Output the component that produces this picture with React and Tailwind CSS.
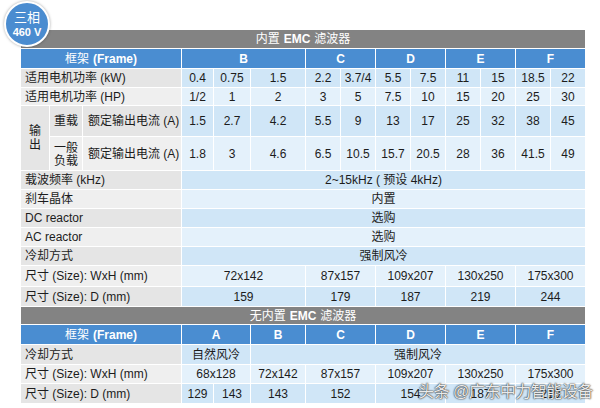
const DARK = "bg-[#d0e6f7]";
const LIGHT = "bg-[#e4f1fb]";
const LDARK = "bg-[#e5e5e5]";
const LLIGHT = "bg-[#efefef]";

const spans = {
  1: "col-span-1",
  2: "col-span-2",
  3: "col-span-3",
  9: "col-span-9",
  11: "col-span-11",
};

function Head({ children, span }) {
  return (
    <div className={`${spans[span]} bg-[#4a8dd1] text-white font-bold flex items-center justify-center`}>
      {children}
    </div>
  );
}

function Label({ children, dark, span = 3, className = "" }) {
  return (
    <div className={`${spans[span]} ${dark ? LDARK : LLIGHT} flex items-center pl-1 ${className}`}>
      {children}
    </div>
  );
}

function Cells({ values, dark }) {
  return values.map(([v, span], i) => (
    <div key={i} className={`${spans[span || 1]} ${dark ? DARK : LIGHT} flex items-center justify-center`}>
      {v}
    </div>
  ));
}

const one = (arr) => arr.map((v) => [v, 1]);

function GrayBar({ children, h }) {
  return (
    <div className={`${h} bg-[#838383] text-white flex items-center justify-center`}>
      {children}
    </div>
  );
}

const COLS =
  "grid-cols-[28px_32px_98px_31px_36px_54px_34px_34px_34px_34px_34px_34px_34px_34px]";

export default function App() {
  return (
    <div className="relative w-[600px] h-[408px] bg-white overflow-hidden text-[12px] text-[#1c1c1c] [font-family:Liberation_Sans,Noto_Sans_CJK_SC,sans-serif]">
      <div className="pt-[30px] pl-[21px] w-[585px]">
        <GrayBar h="h-[18px]">
          内置 <b className="mx-1">EMC</b> 滤波器
        </GrayBar>
        <div
          className={`mt-px grid ${COLS} grid-rows-[19px_18px_17px_30px_33px_18px_18px_18px_18px_18px_20px_19px] gap-px bg-white`}
        >
          <Head span={3}>
            <span className="font-normal mr-1">框架</span>(Frame)
          </Head>
          <Head span={3}>B</Head>
          <Head span={2}>C</Head>
          <Head span={2}>D</Head>
          <Head span={2}>E</Head>
          <Head span={2}>F</Head>

          <Label dark>适用电机功率 (kW)</Label>
          <Cells dark values={one(["0.4", "0.75", "1.5", "2.2", "3.7/4", "5.5", "7.5", "11", "15", "18.5", "22"])} />

          <Label>适用电机功率 (HP)</Label>
          <Cells values={one(["1/2", "1", "2", "3", "5", "7.5", "10", "15", "20", "25", "30"])} />

          <div className={`row-span-2 ${LDARK} flex flex-col items-center justify-center leading-[14px]`}>
            <span>输</span>
            <span>出</span>
          </div>
          <div className={`${LDARK} flex items-center justify-center`}>重载</div>
          <div className={`${LDARK} flex items-center pl-[5px]`}>额定输出电流 (A)</div>
          <Cells dark values={one(["1.5", "2.7", "4.2", "5.5", "9", "13", "17", "25", "32", "38", "45"])} />

          <div className={`${LLIGHT} flex flex-col items-center justify-center leading-[13px] pt-[2px]`}>
            <span>一般</span>
            <span>负载</span>
          </div>
          <div className={`${LLIGHT} flex items-center pl-[5px]`}>额定输出电流 (A)</div>
          <Cells values={one(["1.8", "3", "4.6", "6.5", "10.5", "15.7", "20.5", "28", "36", "41.5", "49"])} />

          <Label dark>载波频率 (kHz)</Label>
          <Cells dark values={[["2~15kHz ( 预设 4kHz)", 11]]} />

          <Label>刹车晶体</Label>
          <Cells values={[["内置", 11]]} />

          <Label dark>DC reactor</Label>
          <Cells dark values={[["选购", 11]]} />

          <Label>AC reactor</Label>
          <Cells values={[["选购", 11]]} />

          <Label dark>冷却方式</Label>
          <Cells dark values={[["强制风冷", 11]]} />

          <Label>尺寸 (Size): WxH (mm)</Label>
          <Cells
            values={[["72x142", 3], ["87x157", 2], ["109x207", 2], ["130x250", 2], ["175x300", 2]]}
          />

          <Label dark>尺寸 (Size): D (mm)</Label>
          <Cells dark values={[["159", 3], ["179", 2], ["187", 2], ["219", 2], ["244", 2]]} />
        </div>

        <div className="mt-px">
          <GrayBar h="h-[17px]">
            无内置 <b className="mx-1">EMC</b> 滤波器
          </GrayBar>
        </div>
        <div className={`grid ${COLS} grid-rows-[19px_19px_18px_19px] gap-px mt-px bg-white`}>
          <Head span={3}>
            <span className="font-normal mr-1">框架</span>(Frame)
          </Head>
          <Head span={2}>A</Head>
          <Head span={1}>B</Head>
          <Head span={2}>C</Head>
          <Head span={2}>D</Head>
          <Head span={2}>E</Head>
          <Head span={2}>F</Head>

          <Label dark>冷却方式</Label>
          <Cells dark values={[["自然风冷", 2], ["强制风冷", 9]]} />

          <Label>尺寸 (Size): WxH (mm)</Label>
          <Cells
            values={[["68x128", 2], ["72x142", 1], ["87x157", 2], ["109x207", 2], ["130x250", 2], ["175x300", 2]]}
          />

          <Label dark>尺寸 (Size): D (mm)</Label>
          <Cells
            dark
            values={[["129", 1], ["143", 1], ["143", 1], ["152", 2], ["154", 2], ["187", 2], ["219", 2]]}
          />
        </div>
      </div>

      <div className="absolute left-[4px] top-[1px] w-[46px] h-[46px] rounded-full bg-[#4a8cd0] border-2 border-white shadow-[0_0_3px_rgba(0,0,0,0.35)] flex flex-col items-center justify-center text-white leading-none">
        <span className="text-[13px]">三相</span>
        <span className="text-[11px] font-bold mt-[3px]">460 V</span>
      </div>

      <div className="absolute left-[418px] top-[380px] text-[16px] text-white/90 tracking-[-0.5px] [text-shadow:0_0_2px_#333,0_0_1px_#000]">
        头条 @广东中力智能设备
      </div>
    </div>
  );
}
